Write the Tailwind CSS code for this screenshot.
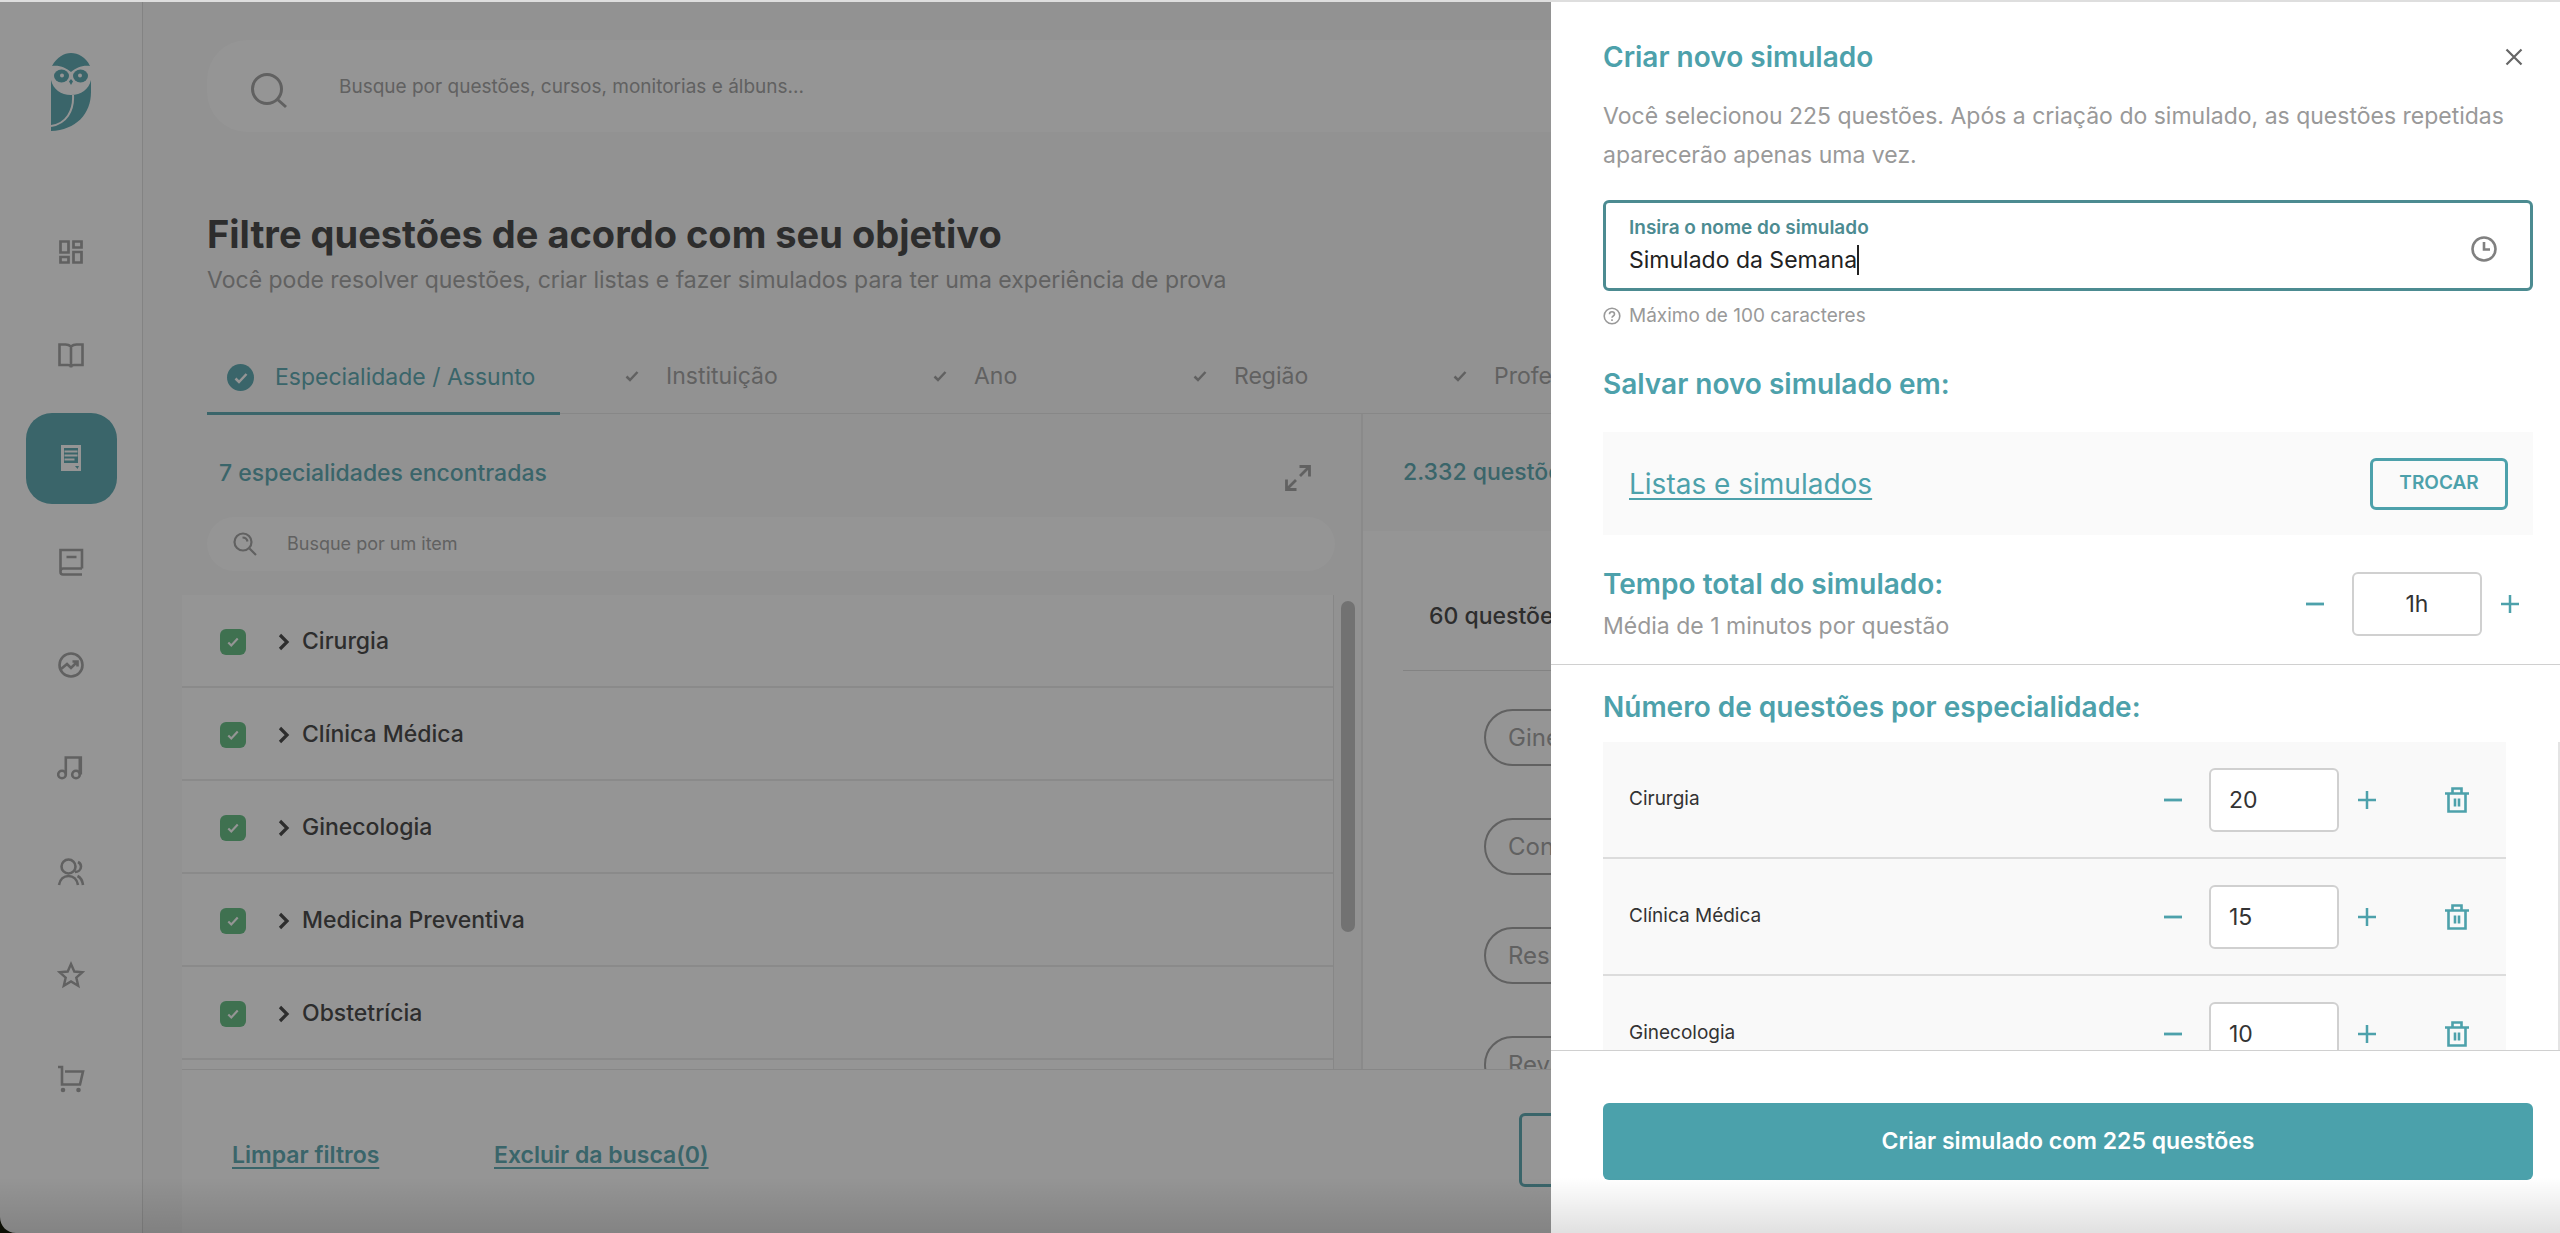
<!DOCTYPE html>
<html lang="pt-BR">
<head>
<meta charset="utf-8">
<title>Criar novo simulado</title>
<script src="https://cdn.jsdelivr.net/npm/@tailwindcss/browser@4"></script>
</head>
<body class="relative h-screen overflow-hidden bg-white font-['Inter',sans-serif] text-[#333]">

<svg class="hidden">
  <symbol id="check" viewBox="0 0 14 14"><path d="M1.500 7.500 5 11 12.500 3" fill="none" stroke="currentColor" stroke-width="2.500"/></symbol>
  <symbol id="chevron" viewBox="0 0 12 18"><path d="M2 2l7 7-7 7" fill="none" stroke="currentColor" stroke-width="3.200"/></symbol>
  <symbol id="minus" viewBox="0 0 20 20"><path d="M1 10h18" stroke="currentColor" stroke-width="2.800"/></symbol>
  <symbol id="plus" viewBox="0 0 20 20"><path d="M1 10h18M10 1v18" stroke="currentColor" stroke-width="2.500"/></symbol>
  <symbol id="trash" viewBox="0 0 24 26"><path d="M0 6.500h24M3.500 6.500v18h17v-18M7.500 6V1.500h9V6M10 11.500v8M14 11.500v8" fill="none" stroke="currentColor" stroke-width="2.600"/></symbol>
</svg>

<div class="flex h-full">
  <!-- Sidebar -->
  <nav class="flex w-[143px] shrink-0 flex-col items-center border-r border-[#dcdcdc] pb-[109px] pt-[53px] text-[#999]">
    <a href="#" aria-label="Início" class="block">
      <svg class="h-[78px] w-10" viewBox="0 0 40 78">
        <path d="M1 13C6 4 13 0 20 0s15 4 19 13c-8-1-14 2-19 6C15 15 9 12 1 13z" fill="#4da1ab"/>
        <path d="M0 27c2 9 10 15 20 15s18-6 20-15v12c0 22-15 38-40 39z" fill="#4da1ab"/>
        <path d="M22 42c1 16-7 29-22 31" fill="none" stroke="#fff" stroke-width="2"/>
        <ellipse cx="10.500" cy="23" rx="7.500" ry="6.500" fill="#4da1ab"/><ellipse cx="29.500" cy="23" rx="7.500" ry="6.500" fill="#4da1ab"/>
        <circle cx="11" cy="22.500" r="2" fill="#fff"/><circle cx="29" cy="22.500" r="2" fill="#fff"/>
        <path d="M20 26l2 2.500-2 3.500-2-3.500z" fill="#4da1ab"/>
      </svg>
    </a>
    <div class="mt-[75px] flex flex-1 flex-col items-center justify-between">
      <a href="#" aria-label="Painel" class="flex size-[91px] items-center justify-center"><svg class="size-7" viewBox="0 0 28 28" fill="none" stroke="currentColor" stroke-width="2.700"><path d="M3.500 3.500h8v11h-8zM16.500 3.500h8v6h-8zM3.500 19h8v5.500h-8zM16.500 14h8v10.500h-8z"/></svg></a>
      <a href="#" aria-label="Cursos" class="flex size-[91px] items-center justify-center"><svg class="size-7" viewBox="0 0 28 28" fill="none" stroke="currentColor" stroke-width="2.600"><path d="M14 5.500C12 3.800 10.500 3.500 8.500 3.500h-6v20.500H11c1.500 0 3 .5 3 2.500V5.500zM14 5.500c2-1.700 3.500-2 5.500-2h6v20.500H17c-1.500 0-3 .5-3 2.500"/></svg></a>
      <a href="#" aria-label="Questões" class="flex size-[91px] items-center justify-center rounded-[26px] bg-[#4da1ab] text-white"><svg class="size-7" viewBox="0 0 28 28"><path fill="currentColor" fill-rule="evenodd" d="M4 1h20v26H4zM7 4v15h14V4z"/><path d="M7.500 7.500h13M7.500 11.500h13M7.500 15.500h10" stroke="currentColor" stroke-width="1.800"/><path d="M18 22l4 0-1.500 3z" fill="#4da1ab"/></svg></a>
      <a href="#" aria-label="Cadernos" class="flex size-[91px] items-center justify-center"><svg class="size-7" viewBox="0 0 28 28" fill="none" stroke="currentColor" stroke-width="2.600"><path d="M25 20.500V2H3.500v22c0 1.500 1 2.500 2.500 2.500h19M25 20.500H6c-1.500 0-2.500 1.500-2.500 3M9.500 9h10"/></svg></a>
      <a href="#" aria-label="Desempenho" class="flex size-[91px] items-center justify-center"><svg class="size-7" viewBox="0 0 28 28" fill="none" stroke="currentColor" stroke-width="2.600"><circle cx="14" cy="14" r="11.500"/><path d="M4 18l6-5 4 4 6.500-6.500M15.500 10.500h5v5"/></svg></a>
      <a href="#" aria-label="Áudios" class="flex size-[91px] items-center justify-center"><svg class="size-7" viewBox="0 0 28 28" fill="none" stroke="currentColor" stroke-width="2.600"><circle cx="5" cy="20.500" r="3.800"/><circle cx="19" cy="20.500" r="3.800"/><path d="M8.800 20.500v-17h15v17M22.800 20.500V3.500"/></svg></a>
      <a href="#" aria-label="Comunidade" class="flex size-[91px] items-center justify-center"><svg class="size-7" viewBox="0 0 28 28" fill="none" stroke="currentColor" stroke-width="2.600"><circle cx="11.500" cy="8.500" r="7"/><path d="M2 27c1-6 5-9 9.500-9s8.500 3 9.500 9M18 14c3 0 6-2 6-5.500 0-2-1-3.500-3-4.500M20.500 18c3 1.500 5 5 5.500 9"/></svg></a>
      <a href="#" aria-label="Favoritos" class="flex size-[91px] items-center justify-center"><svg class="size-7" viewBox="0 0 28 28" fill="none" stroke="currentColor" stroke-width="2.400"><path d="M14 3l3.300 7.500 8.200.700-6.200 5.400 1.900 8.100L14 20.400l-7.200 4.300 1.900-8.100-6.200-5.400 8.200-.7z"/></svg></a>
      <a href="#" aria-label="Loja" class="flex size-[91px] items-center justify-center"><svg class="size-7" viewBox="0 0 28 28" fill="none" stroke="currentColor" stroke-width="2.600"><path d="M1 2h4v17.500h18L26 6.500H8"/><circle cx="6" cy="25" r="2.300" fill="currentColor" stroke="none"/><circle cx="21.500" cy="25" r="2.300" fill="currentColor" stroke="none"/></svg></a>
    </div>
  </nav>

  <!-- Main -->
  <main class="flex min-w-0 flex-1 flex-col bg-[#f9f9f9] pt-10">
    <div class="ml-16 mr-16 flex h-[92px] shrink-0 items-center rounded-[40px] bg-white pl-11">
      <svg class="mt-2.5 size-9 text-[#999]" viewBox="0 0 36 36" fill="none" stroke="currentColor" stroke-width="3"><circle cx="16" cy="16" r="14.500"/><path d="M26 26l9 8"/></svg>
      <input type="search" aria-label="Busca geral" placeholder="Busque por questões, cursos, monitorias e álbuns..." class="ml-[52px] h-10 flex-1 bg-transparent text-[19px] outline-none placeholder:text-[#999]">
    </div>

    <h1 class="ml-16 mt-[78px] text-[38px] font-bold leading-12 text-[#333]">Filtre questões de acordo com seu objetivo</h1>
    <p class="ml-16 mt-1 whitespace-nowrap text-[23px] leading-9 text-[#999]">Você pode resolver questões, criar listas e fazer simulados para ter uma experiência de prova</p>

    <div role="tablist" class="ml-16 mt-[41px] flex h-[75px] shrink-0 border-b border-[#e4e4e4] text-[23px] text-[#999]">
      <button role="tab" aria-selected="true" class="mr-[38px] flex h-[76px] w-[353px] shrink-0 items-center gap-[21px] border-b-3 border-[#4da1ab] pl-5 pt-1 text-[#4da1ab]"><span class="flex size-[27px] items-center justify-center rounded-full bg-[#4da1ab] text-white"><svg class="size-3.5"><use href="#check"/></svg></span>Especialidade / Assunto</button>
      <button role="tab" class="flex w-[308px] shrink-0 items-center gap-[21px] pl-5"><span class="flex size-[27px] items-center justify-center"><svg class="size-3.5"><use href="#check"/></svg></span>Instituição</button>
      <button role="tab" class="flex w-[260px] shrink-0 items-center gap-[21px] pl-5"><span class="flex size-[27px] items-center justify-center"><svg class="size-3.5"><use href="#check"/></svg></span>Ano</button>
      <button role="tab" class="flex w-[260px] shrink-0 items-center gap-[21px] pl-5"><span class="flex size-[27px] items-center justify-center"><svg class="size-3.5"><use href="#check"/></svg></span>Região</button>
      <button role="tab" class="flex w-[260px] shrink-0 items-center gap-[21px] pl-5"><span class="flex size-[27px] items-center justify-center"><svg class="size-3.5"><use href="#check"/></svg></span>Professor</button>
    </div>

    <div class="ml-[39px] flex min-h-0 flex-1">
      <!-- Specialties -->
      <section class="flex w-[1181px] shrink-0 flex-col border-r-2 border-[#eaeaea]">
        <div class="flex h-[103px] shrink-0 items-center justify-between pl-[37px] pr-[49px] pt-4">
          <h2 class="text-[23px] font-medium text-[#4da1ab]">7 especialidades encontradas</h2>
          <button aria-label="Expandir" class="pt-2 text-[#999]"><svg class="size-7" viewBox="0 0 28 28" fill="none" stroke="currentColor" stroke-width="2.800"><path d="M15.500 2.500h10v10M25 3l-9 9M12.500 25.500h-10v-10M3 25l9-9"/></svg></button>
        </div>
        <div class="ml-[25px] mr-[26px] flex h-[54px] shrink-0 items-center rounded-full bg-white pl-[26px]">
          <svg class="size-6 text-[#999]" viewBox="0 0 24 24" fill="none" stroke="currentColor" stroke-width="2.200"><circle cx="10" cy="10" r="8.500"/><path d="M16.500 16.500l6.500 6.500M9.500 5.500c2.500 0 4.500 1.500 5 4"/></svg>
          <input type="search" aria-label="Busca de item" placeholder="Busque por um item" class="ml-[30px] flex-1 bg-transparent text-lg outline-none placeholder:text-[#999]">
        </div>
        <div class="mt-6 flex min-h-0 flex-1">
          <ul id="areas" class="min-w-0 flex-1 overflow-hidden border-r border-[#e4e4e4] bg-white"></ul>
          <div class="w-[27px] shrink-0 pl-[7px] pt-[6px]"><div class="h-[331px] w-3.5 rounded-full bg-[#bababa]"></div></div>
        </div>
      </section>
      <!-- Questions found -->
      <section class="flex min-w-0 flex-1 flex-col overflow-hidden bg-white">
        <div class="flex h-[117px] shrink-0 items-center bg-[#f9f9f9] pl-10"><h2 class="text-[23px] font-medium text-[#4da1ab]">2.332 questões</h2></div>
        <div class="ml-10 flex h-[140px] shrink-0 items-center border-b border-[#dcdcdc] pl-[26px] pt-8"><p class="text-[23px] font-medium">60 questões</p></div>
        <div class="flex flex-col items-start gap-[52px] pl-[121px] pt-[38px] text-2xl text-[#999]">
          <span class="flex h-[57px] shrink-0 items-center rounded-full border-2 border-[#999] px-[22px]">Ginecologia</span>
          <span class="flex h-[57px] shrink-0 items-center rounded-full border-2 border-[#999] px-[22px]">Concurso</span>
          <span class="flex h-[57px] shrink-0 items-center rounded-full border-2 border-[#999] px-[22px]">Residência</span>
          <span class="flex h-[57px] shrink-0 items-center rounded-full border-2 border-[#999] px-[22px]">Revalida</span>
        </div>
      </section>
    </div>

    <footer class="ml-[39px] flex h-[164px] shrink-0 items-center border-t border-[#e4e4e4] bg-white pl-[50px] text-[23px] font-semibold text-[#4da1ab]">
      <a href="#" class="mt-2 w-[262px] underline underline-offset-4 decoration-2">Limpar filtros</a>
      <a href="#" class="mt-2 underline underline-offset-4 decoration-2">Excluir da busca(0)</a>
      <button aria-label="Criar lista" class="mb-1 ml-auto mr-24 h-[74px] w-[945px] rounded-md border-3 border-[#4da1ab]"></button>
    </footer>
  </main>
</div>

<div class="absolute inset-0 bg-[#272727]/49"></div>

<!-- Drawer -->
<aside aria-label="Criar novo simulado" class="absolute inset-y-0 right-0 flex w-[1009px] max-w-full flex-col bg-white">
  <div class="flex shrink-0 flex-col border-b border-[#d0d0d0] pb-5 pl-[52px] pr-[27px] pt-[37px]">
    <div class="flex h-10 items-center justify-between pr-2.5">
      <h2 class="text-[28px] font-semibold text-[#4da1ab]">Criar novo simulado</h2>
      <button aria-label="Fechar"><svg class="size-[18px] text-[#666]" viewBox="0 0 18 18" stroke="currentColor" stroke-width="2.200"><path d="M1.500 1.500l15 15M16.500 1.500l-15 15"/></svg></button>
    </div>
    <p class="mt-5 text-[23px] leading-[39px] text-[#999]">Você selecionou 225 questões. Após a criação do simulado, as questões repetidas<br>aparecerão apenas uma vez.</p>
    <div class="mt-[25px] flex h-[91px] items-center rounded-md border-3 border-[#4c8b91] pl-[23px] pr-[33px]">
      <div class="flex flex-1 flex-col gap-1">
        <label for="nome" class="text-[19px] font-semibold leading-6 text-[#4c8b91]">Insira o nome do simulado</label>
        <div class="flex h-8 items-center"><input id="nome" value="Simulado da Semana" class="field-sizing-content text-[23px] leading-8 text-[#222] outline-none"><span class="h-[30px] w-0.5 bg-[#222]"></span></div>
      </div>
      <svg class="mt-1.5 size-[26px] text-[#808080]" viewBox="0 0 26 26" fill="none" stroke="currentColor" stroke-width="2.600"><circle cx="13" cy="13" r="11.500"/><path d="M13 6v7.500h6"/></svg>
    </div>
    <p class="mt-[13px] flex h-6 items-center gap-2 text-[19px] text-[#999]"><svg class="size-[18px]" viewBox="0 0 18 18" fill="none" stroke="currentColor" stroke-width="1.600"><circle cx="9" cy="9" r="7.800"/><path d="M6.500 7.200c0-3.200 5-3.200 5 0 0 1.800-2.500 1.800-2.500 3.600M9 12.200v1.700"/></svg>Máximo de 100 caracteres</p>
    <h3 class="mt-9 text-[28px] font-semibold leading-10 text-[#4da1ab]">Salvar novo simulado em:</h3>
    <div class="mt-7 flex h-[103px] items-center justify-between bg-[#fafafa] pl-[26px] pr-[25px]">
      <a href="#" class="text-[28px] text-[#4da1ab] underline decoration-2 underline-offset-4">Listas e simulados</a>
      <button class="h-[52px] w-[138px] rounded-md border-3 border-[#4da1ab] text-[19px] font-semibold text-[#4da1ab]">TROCAR</button>
    </div>
    <div class="mt-[29px] flex items-start justify-between">
      <div>
        <h3 class="text-[28px] font-semibold leading-10 text-[#4da1ab]">Tempo total do simulado:</h3>
        <p class="mt-1 text-[23px] leading-9 text-[#999]">Média de 1 minutos por questão</p>
      </div>
      <div class="mt-2 flex items-center pr-[13px] text-[#4da1ab]">
        <button aria-label="Diminuir tempo"><svg class="size-5"><use href="#minus"/></svg></button>
        <input aria-label="Tempo total" value="1h" class="ml-[27px] h-16 w-[130px] rounded-md border-2 border-[#d0d0d0] text-center text-[23px] text-[#333]">
        <button aria-label="Aumentar tempo" class="ml-[18px]"><svg class="size-5"><use href="#plus"/></svg></button>
      </div>
    </div>
  </div>

  <div class="flex min-h-0 flex-1 flex-col">
    <h3 class="ml-[52px] mt-[22px] text-[28px] font-semibold leading-10 text-[#4da1ab]">Número de questões por especialidade:</h3>
    <ul id="counts" class="mt-[15px] min-h-0 flex-1 overflow-hidden border-r-2 border-[#e4e4e4] pl-[52px] pr-[52px]"></ul>
  </div>

  <div class="h-[183px] shrink-0 border-t border-[#d0d0d0] pl-[52px] pr-[27px] pt-[52px]">
    <button class="h-[77px] w-full rounded-md bg-[#4ba1ab] text-[23px] font-semibold text-white">Criar simulado com 225 questões</button>
  </div>
</aside>

<!-- Window edges -->
<div class="pointer-events-none absolute inset-x-0 bottom-0 h-14 bg-linear-to-b from-black/0 to-black/12"></div>
<div class="pointer-events-none absolute inset-x-0 top-0 h-0.5 bg-[#dedede]"></div>
<svg class="absolute bottom-0 left-0 size-4" viewBox="0 0 16 16"><path d="M0 0c0 9 7 16 16 16H0z" fill="#0d0f05"/></svg>

<script>
  const areas = ['Cirurgia', 'Clínica Médica', 'Ginecologia', 'Medicina Preventiva', 'Obstetrícia'];
  document.getElementById('areas').innerHTML = areas.map(name => `
    <li class="flex h-[93px] items-center border-b-2 border-[#eaeaea] pl-[38px] pt-0.5">
      <label class="relative flex size-[26px] items-center justify-center text-white">
        <input type="checkbox" checked aria-label="${name}" class="absolute inset-0 appearance-none rounded-md bg-[#56b878]">
        <svg class="relative size-3"><use href="#check"/></svg>
      </label>
      <button class="ml-[32px] flex items-center gap-3 text-[23px] font-medium text-[#333]"><svg class="h-[18px] w-3"><use href="#chevron"/></svg>${name}</button>
    </li>`).join('');
  const counts = [['Cirurgia', 20], ['Clínica Médica', 15], ['Ginecologia', 10]];
  document.getElementById('counts').innerHTML = counts.map(([name, n], i) => `
    <li class="flex h-[117px] items-center border-b-2 border-[#dcdcdc] bg-[#f9f9f9] pl-[26px] pr-[37px] text-[#4da1ab]">
      <label for="q${i}" class="flex-1 text-[19px] text-[#333]">${name}</label>
      <button aria-label="Diminuir"><svg class="size-5"><use href="#minus"/></svg></button>
      <input id="q${i}" value="${n}" class="ml-[26px] h-16 w-[130px] rounded-md border-2 border-[#d0d0d0] bg-white pl-[18px] text-[23px] text-[#333]">
      <button aria-label="Aumentar" class="ml-[18px]"><svg class="size-5"><use href="#plus"/></svg></button>
      <button aria-label="Excluir" class="ml-[68px]"><svg class="h-[26px] w-6"><use href="#trash"/></svg></button>
    </li>`).join('');
</script>
</body>
</html>
